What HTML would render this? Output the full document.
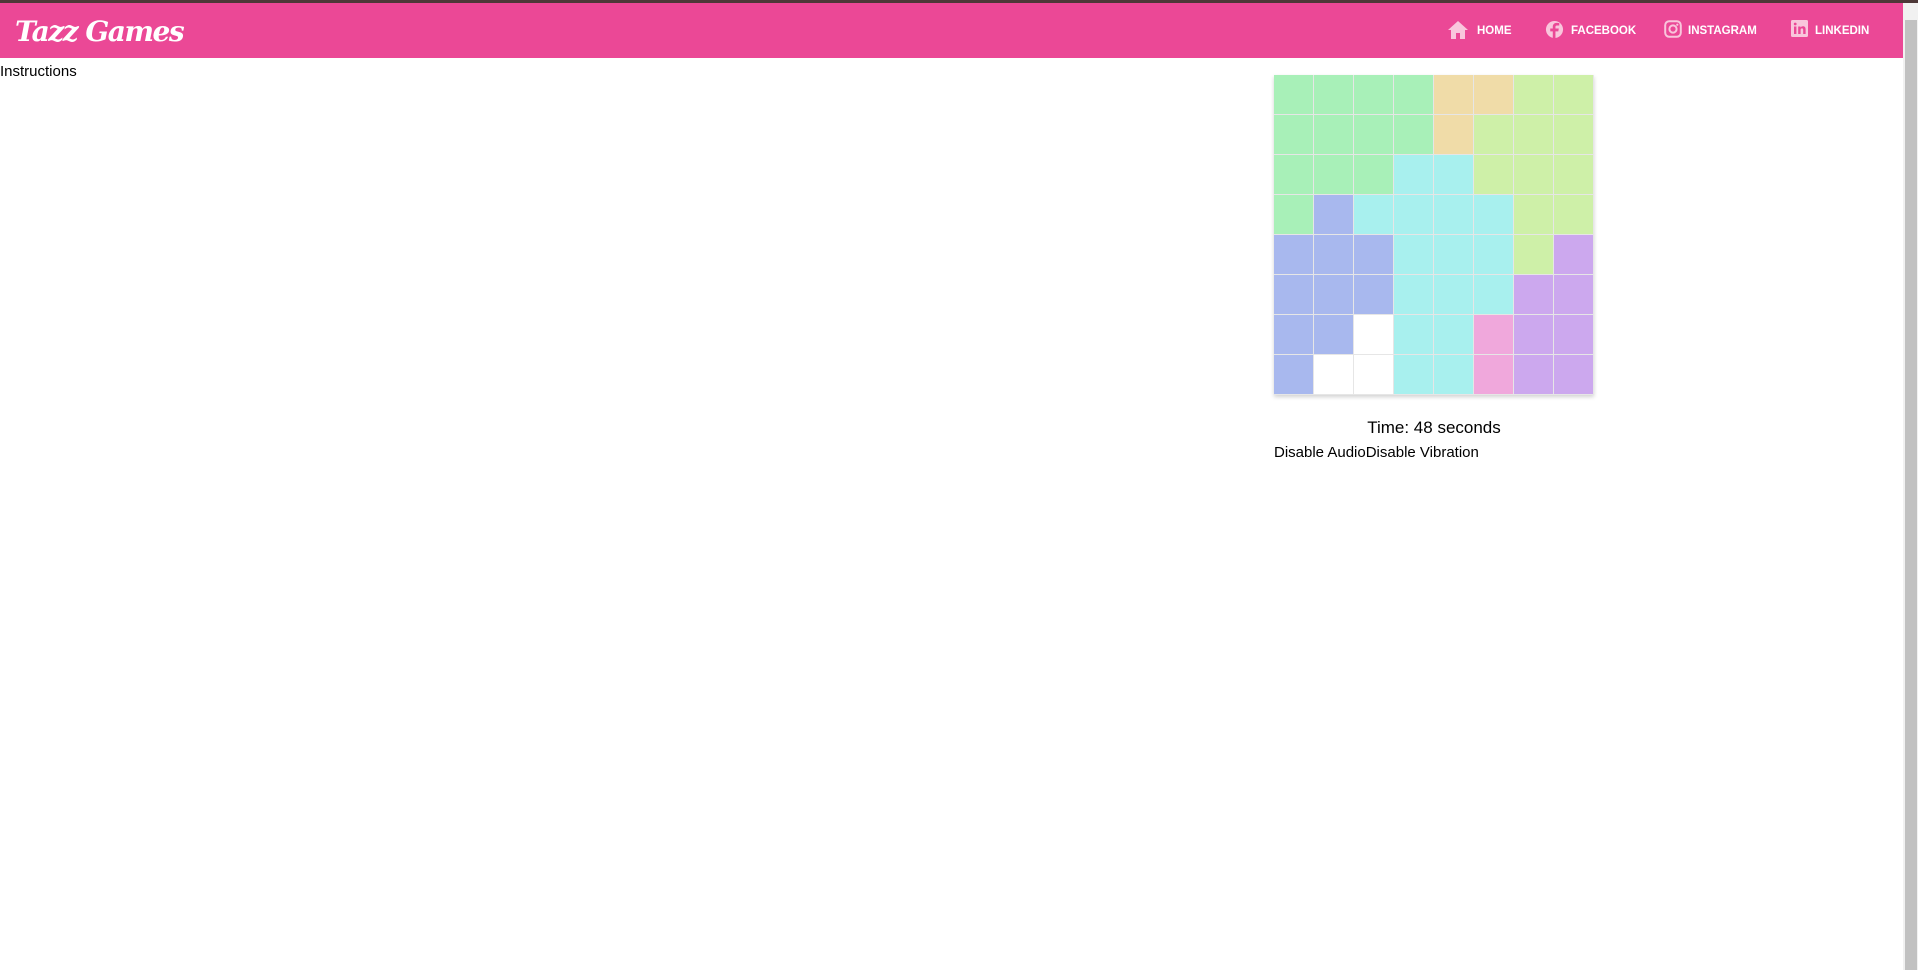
<!DOCTYPE html>
<html><head><style>
html,body{margin:0;padding:0;width:1918px;height:970px;overflow:hidden;background:#fff;font-family:"Liberation Sans",sans-serif;position:relative}
.top{position:absolute;left:0;top:0;width:1918px;height:3px;background:#4d3838}
.hdr{position:absolute;left:0;top:3px;width:1903px;height:55px;background:#eb4896}
.logo{position:absolute;left:15px;top:12px;color:#fff;font:italic bold 28px "DejaVu Serif",serif;letter-spacing:-1.5px}
.nav{position:absolute;top:23px;color:#fff;font-weight:bold;font-size:11.5px;line-height:16px}
.ic{position:absolute;top:20px}
.sb{position:absolute;left:1903px;top:3px;width:15px;height:967px;background:#f1f1f1}
.th{position:absolute;left:1905px;top:20px;width:12px;height:950px;background:#c1c1c1}
.ins{position:absolute;left:0;top:63px;font-size:15px;color:#000}
.grid{position:absolute;left:1274px;top:75px;width:320px;height:320px;display:grid;grid-template-columns:repeat(8,40px);box-shadow:0 2px 4px rgba(0,0,0,.18)}
.grid div{box-sizing:border-box;border-right:1px solid #e6e6e6;border-bottom:1px solid #e6e6e6}
.g{background:#a8f0b8}.y{background:#f0dca8}.l{background:#cef0a8}.c{background:#a8f0ee}.b{background:#a8b8ee}.p{background:#cca8ee}.k{background:#f0a8dc}.w{background:#fff}
.time{position:absolute;left:1274px;width:320px;text-align:center;top:418px;font-size:17px}
.dis{position:absolute;left:1274px;top:444px;font-size:15px}
</style></head><body>
<div class="top"></div>
<div class="hdr">
<div class="logo">Tazz Games</div>
</div>
<svg class="ic" style="left:1447px" width="22" height="20" viewBox="0 0 22 20"><path d="M11 1L1 10h3v9h5v-6h4v6h5v-9h3z" fill="#f9c6dc"/></svg>
<div class="nav" style="left:1477px">HOME</div>
<svg class="ic" style="left:1545px" width="19" height="19" viewBox="0 0 20 20"><circle cx="10" cy="10" r="9" fill="#f9c6dc"/><path d="M11 20v-8h3l.5-3H11V7.3c0-.9.4-1.5 1.6-1.5H15V3.2c-.5 0-1.5-.2-2.6-.2C10 3 8.2 4.4 8.2 7v2H5.5v3h2.7v8z" fill="#eb4896"/></svg>
<div class="nav" style="left:1571px">FACEBOOK</div>
<svg class="ic" style="left:1664px" width="18" height="18" viewBox="0 0 18 18"><rect x="1.2" y="1.2" width="15.6" height="15.6" rx="4" fill="none" stroke="#f9c6dc" stroke-width="2"/><circle cx="9" cy="9" r="3.6" fill="none" stroke="#f9c6dc" stroke-width="2"/><circle cx="13.3" cy="4.7" r="1.1" fill="#f9c6dc"/></svg>
<div class="nav" style="left:1688px">INSTAGRAM</div>
<svg class="ic" style="left:1791px" width="17" height="17" viewBox="0 0 17 17"><rect width="17" height="17" rx="1.5" fill="#f9c6dc"/><rect x="3" y="6.5" width="2.4" height="7.5" fill="#eb4896"/><circle cx="4.2" cy="4" r="1.4" fill="#eb4896"/><path d="M7.2 6.5h2.3v1.1c.5-.8 1.4-1.3 2.5-1.3 1.9 0 2.6 1.2 2.6 3.2V14h-2.4v-4c0-1-.3-1.6-1.2-1.6s-1.4.6-1.4 1.6v4H7.2z" fill="#eb4896"/></svg>
<div class="nav" style="left:1815px">LINKEDIN</div>
<div class="sb"></div><div class="th"></div>
<div class="ins">Instructions</div>
<div class="grid">
<div class="g"></div><div class="g"></div><div class="g"></div><div class="g"></div><div class="y"></div><div class="y"></div><div class="l"></div><div class="l"></div>
<div class="g"></div><div class="g"></div><div class="g"></div><div class="g"></div><div class="y"></div><div class="l"></div><div class="l"></div><div class="l"></div>
<div class="g"></div><div class="g"></div><div class="g"></div><div class="c"></div><div class="c"></div><div class="l"></div><div class="l"></div><div class="l"></div>
<div class="g"></div><div class="b"></div><div class="c"></div><div class="c"></div><div class="c"></div><div class="c"></div><div class="l"></div><div class="l"></div>
<div class="b"></div><div class="b"></div><div class="b"></div><div class="c"></div><div class="c"></div><div class="c"></div><div class="l"></div><div class="p"></div>
<div class="b"></div><div class="b"></div><div class="b"></div><div class="c"></div><div class="c"></div><div class="c"></div><div class="p"></div><div class="p"></div>
<div class="b"></div><div class="b"></div><div class="w"></div><div class="c"></div><div class="c"></div><div class="k"></div><div class="p"></div><div class="p"></div>
<div class="b"></div><div class="w"></div><div class="w"></div><div class="c"></div><div class="c"></div><div class="k"></div><div class="p"></div><div class="p"></div>
</div>
<div class="time">Time: 48 seconds</div>
<div class="dis">Disable AudioDisable Vibration</div>
</body></html>
